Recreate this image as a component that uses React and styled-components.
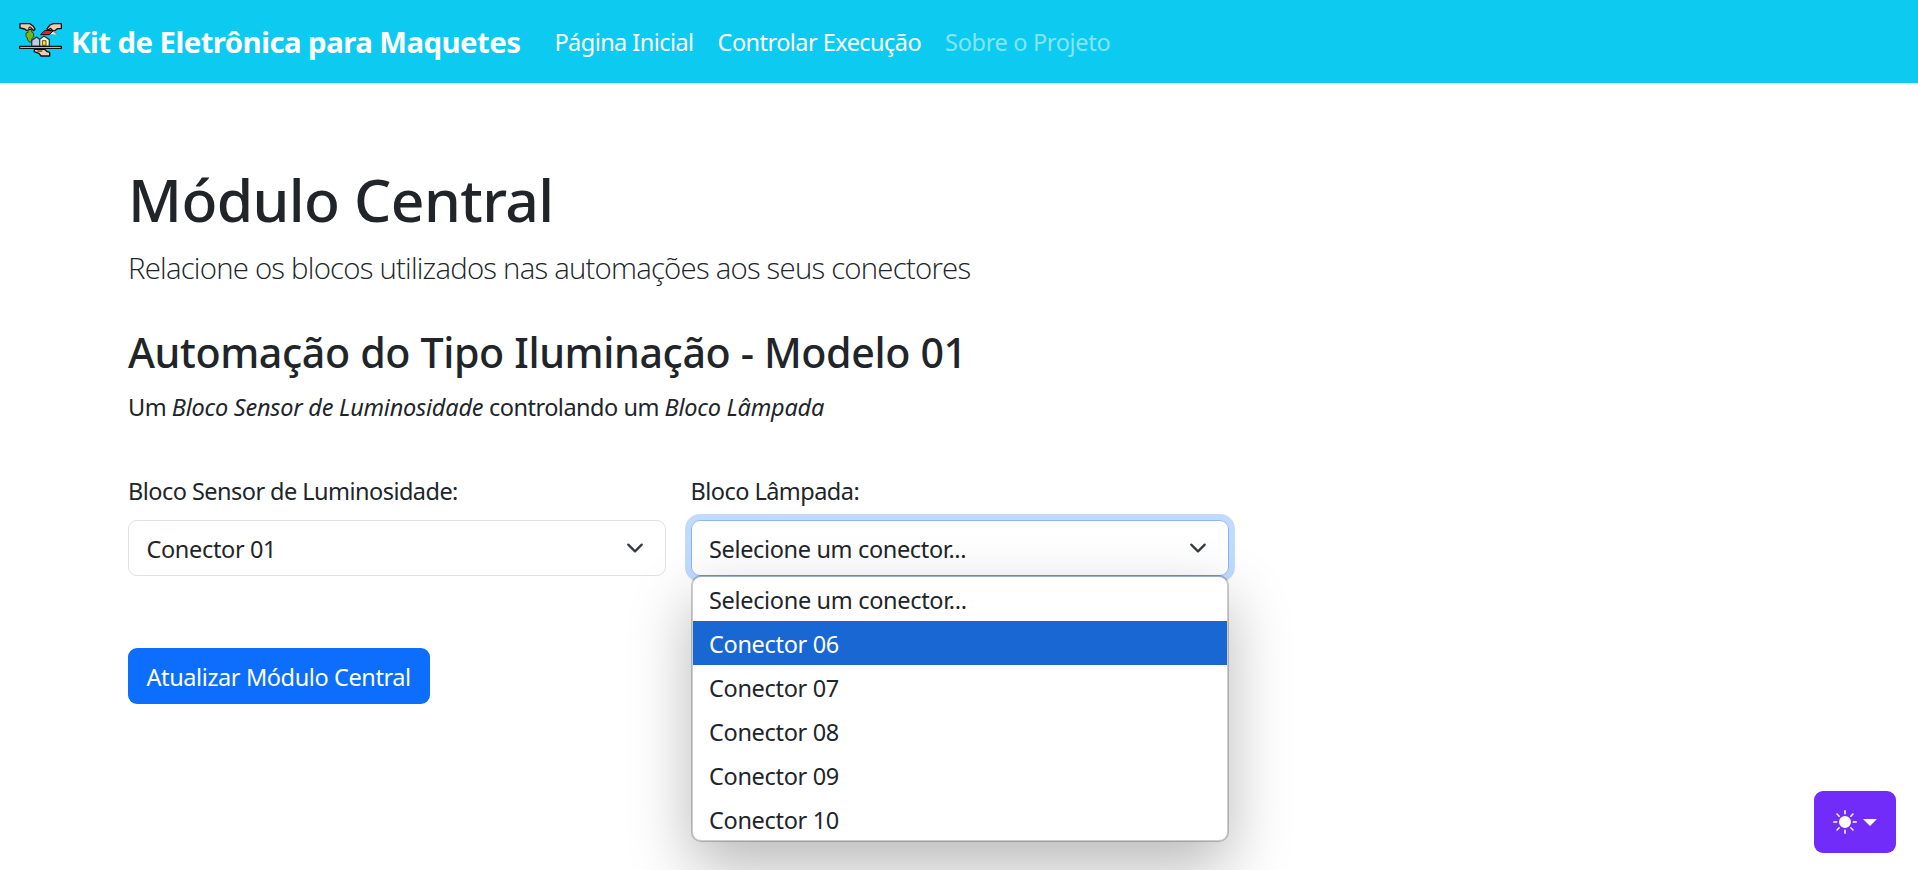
import React from 'react';
import styled, { createGlobalStyle } from 'styled-components';
import { BsSunFill } from 'react-icons/bs';

const GlobalStyle = createGlobalStyle`
  *, *::before, *::after { box-sizing: border-box; }
  html, body { margin: 0; height: 100%; overflow: hidden; }
  body {
    background: #fff;
    color: #212529;
    font: 400 23.5px/36px "Noto Sans", sans-serif;
    letter-spacing: -0.54px;
  }
  #root { height: 100%; }
`;

const Navbar = styled.nav`
  display: flex;
  align-items: center;
  height: 83px;
  padding-left: 18px;
  background: #0dcaf0;
  color: #fff;
`;

const Brand = styled.a`
  display: flex;
  align-items: center;
  gap: 7px;
  margin-right: 34px;
  padding-top: 2px;
  font-size: 29.4px;
  font-weight: 700;
  line-height: 45px;
  letter-spacing: -0.56px;
  white-space: nowrap;
`;

const LogoSvg = styled.svg`
  width: 46px;
  height: 38px;
  margin-bottom: 6px;
`;

const NavList = styled.div`
  display: flex;
  gap: 24px;
`;

const NavLink = styled.a`
  letter-spacing: ${(p) => p.$tracking || '-0.55px'};
  color: ${(p) => (p.$muted ? 'rgba(255, 255, 255, 0.5)' : '#fff')};
  white-space: nowrap;
`;

const Main = styled.main`
  padding: 80px 128px 0;
`;

const Title = styled.h1`
  margin: 0 0 11px;
  font-size: 58.8px;
  font-weight: 500;
  line-height: 72px;
  letter-spacing: -0.6px;
`;

const Lead = styled.p`
  margin: 0 0 36px;
  font-family: "Open Sans", sans-serif;
  font-size: 29.4px;
  font-weight: 300;
  line-height: 45px;
  letter-spacing: -0.79px;
`;

const Subtitle = styled.h2`
  margin: 0 0 12px;
  font-size: 41.2px;
  font-weight: 500;
  line-height: 50px;
  letter-spacing: -0.38px;
`;

const Description = styled.p`
  margin: 0 0 48px;
  letter-spacing: -0.5px;
`;

const BlockName = styled.em`
  letter-spacing: -0.22px;
`;

const Fields = styled.div`
  display: flex;
  gap: 24.5px;
  margin-bottom: 72px;
`;

const Field = styled.div`
  position: relative;
  width: 538px;
`;

const Label = styled.label`
  display: block;
  margin-bottom: 11px;
`;

const SelectBox = styled.div`
  display: flex;
  align-items: center;
  justify-content: space-between;
  height: 56px;
  padding: 0 21px 0 17.5px;
  border: 1px solid ${(p) => (p.$focused ? '#86b7fe' : '#dee2e6')};
  border-radius: 9px;
  box-shadow: ${(p) => (p.$focused ? '0 0 0 6px #c2dafe' : 'none')};
  letter-spacing: -0.35px;
`;

const SelectValue = styled.span`
  padding-top: 2px;
`;

const Chevron = styled.svg`
  width: 18px;
  height: 18px;
  fill: none;
  stroke: #343a40;
  stroke-width: 2;
  stroke-linecap: round;
  stroke-linejoin: round;
`;

const Options = styled.ul`
  position: absolute;
  top: 102px;
  left: 0;
  width: 538px;
  height: 267px;
  margin: 0;
  padding: 0;
  overflow: hidden;
  list-style: none;
  background: #fff;
  background-clip: padding-box;
  border: 2px solid rgba(0, 0, 0, 0.2);
  border-radius: 10px;
  box-shadow: 0 25px 62px rgba(0, 0, 0, 0.28);
`;

const Option = styled.li`
  height: 44px;
  padding: 1px 0 0 16.5px;
  line-height: 44px;
  letter-spacing: -0.33px;
  background: ${(p) => (p.$active ? '#1967d2' : 'transparent')};
  color: ${(p) => (p.$active ? '#fff' : 'inherit')};
`;

const SubmitButton = styled.button`
  height: 56px;
  padding: 1px 19px 0 18.5px;
  border: 0;
  border-radius: 9px;
  background: #0d6efd;
  color: #fff;
  font: inherit;
  letter-spacing: -0.4px;
`;

const ThemeButton = styled.button`
  position: fixed;
  right: 22px;
  bottom: 17px;
  display: flex;
  align-items: center;
  gap: 6px;
  width: 82px;
  height: 62px;
  padding: 0 19px;
  border: 0;
  border-radius: 9px;
  background: #712cf9;
  color: #fff;
`;

const Caret = styled.span`
  border-top: 7px solid currentColor;
  border-right: 7px solid transparent;
  border-left: 7px solid transparent;
`;

function Logo() {
  return (
    <LogoSvg viewBox="54 60 138 114" stroke="#111" strokeWidth="4" strokeLinejoin="round">
      <path d="M60 68H90L100 76L105 84L101 89L94 82L88 88H79L74 84L60 81Z" fill="#f4c9b4" />
      <path d="M184 68H160L150 72L141 83L144 88L152 82L158 89L166 88L172 83H184Z" fill="#f4c9b4" />
      <path d="M84 86H94L96 94L101 97V107L96 112V118L91 124L84 119L82 111L78 106V96L84 94Z" fill="#77b51d" stroke="#2c4d00" strokeWidth="3" />
      <circle cx="90" cy="82" r="4" fill="#9aa" strokeWidth="3" />
      <path d="M150 99L158 89L173 101" fill="#dce3ea" stroke="#6a7780" strokeWidth="3" />
      <path d="M121 101L135 88L160 89L148 101Z" fill="#e3202d" strokeWidth="3" />
      <path d="M95 136V118L110 108L121 117V136Z" fill="#b9cfe5" stroke="#2b333b" strokeWidth="4" />
      <path d="M119 136V115L132 105L148 116V136Z" fill="#f1f1ed" stroke="#383c3b" strokeWidth="4" />
      <path d="M127 133V119H138V133Z" fill="#fae21b" stroke="#5d5613" strokeWidth="3" />
      <path d="M103 145V152L117 157L123 165H149V154L140 151L134 145Z" fill="#f4c9b4" />
      <path d="M112 150H127" fill="none" strokeWidth="3" />
      <rect x="59" y="136" width="125" height="6" fill="#e9f4f8" />
    </LogoSvg>
  );
}

function Select({ label, value, focused, children }) {
  return (
    <Field>
      <Label>{label}</Label>
      <SelectBox $focused={focused}>
        <SelectValue>{value}</SelectValue>
        <Chevron viewBox="0 0 16 16">
          <path d="m2 5 6 6 6-6" />
        </Chevron>
      </SelectBox>
      {children}
    </Field>
  );
}

const OPTIONS = [
  'Selecione um conector...',
  'Conector 06',
  'Conector 07',
  'Conector 08',
  'Conector 09',
  'Conector 10',
];

export default function App() {
  return (
    <>
      <GlobalStyle />
      <Navbar>
        <Brand>
          <Logo />
          Kit de Eletrônica para Maquetes
        </Brand>
        <NavList>
          <NavLink>Página Inicial</NavLink>
          <NavLink>Controlar Execução</NavLink>
          <NavLink $muted $tracking="-0.33px">Sobre o Projeto</NavLink>
        </NavList>
      </Navbar>
      <Main>
        <Title>Módulo Central</Title>
        <Lead>Relacione os blocos utilizados nas automações aos seus conectores</Lead>
        <Subtitle>Automação do Tipo Iluminação - Modelo 01</Subtitle>
        <Description>
          Um <BlockName>Bloco Sensor de Luminosidade</BlockName> controlando um{' '}
          <BlockName>Bloco Lâmpada</BlockName>
        </Description>
        <Fields>
          <Select label="Bloco Sensor de Luminosidade:" value="Conector 01" />
          <Select label="Bloco Lâmpada:" value="Selecione um conector..." focused>
            <Options>
              {OPTIONS.map((name) => (
                <Option key={name} $active={name === 'Conector 06'}>{name}</Option>
              ))}
            </Options>
          </Select>
        </Fields>
        <SubmitButton>Atualizar Módulo Central</SubmitButton>
      </Main>
      <ThemeButton aria-label="Tema">
        <BsSunFill size={24} />
        <Caret />
      </ThemeButton>
    </>
  );
}
